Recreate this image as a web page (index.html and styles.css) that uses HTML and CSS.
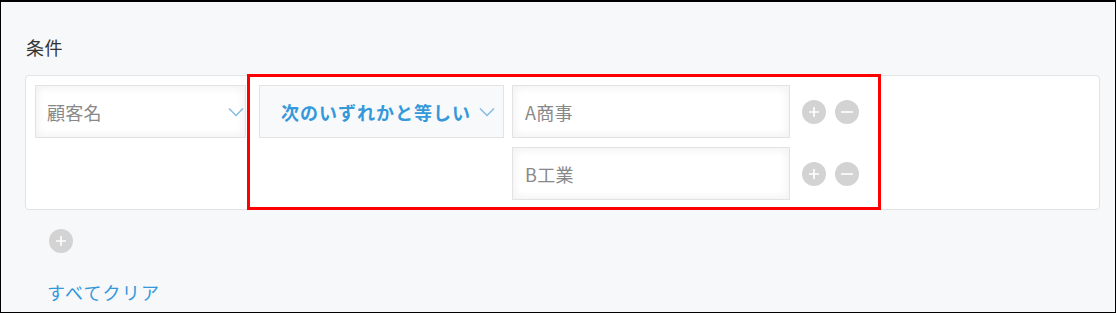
FILE: index.html
```html
<!DOCTYPE html>
<html lang="ja">
<head>
<meta charset="utf-8">
<link rel="stylesheet" href="styles.css">
</head>
<body>
<div class="frame">
  <div class="title">条件</div>
  <div class="card">
    <div class="select field">
      <span class="label">顧客名</span>
      <svg class="chev" width="16" height="10" viewBox="0 0 16 10"><path d="M1 1.5 L8 8.5 L15 1.5" fill="none" stroke="#84bce6" stroke-width="1.5"/></svg>
    </div>
    <div class="select operator">
      <span class="op-label">次のいずれかと等しい</span>
      <svg class="chev" width="16" height="10" viewBox="0 0 16 10"><path d="M1 1.5 L8 8.5 L15 1.5" fill="none" stroke="#84bce6" stroke-width="1.5"/></svg>
    </div>
    <div class="values">
      <div class="value-row">
        <div class="input">A商事</div>
        <span class="btn"><svg width="24" height="24" viewBox="0 0 24 24"><circle cx="12" cy="12" r="12" fill="#d3d3d3"/><path d="M12 7v10M7 12h10" stroke="#fff" stroke-width="1.6"/></svg></span>
        <span class="btn"><svg width="24" height="24" viewBox="0 0 24 24"><circle cx="12" cy="12" r="12" fill="#d3d3d3"/><path d="M6 12h12" stroke="#fff" stroke-width="1.6"/></svg></span>
      </div>
      <div class="value-row">
        <div class="input">B工業</div>
        <span class="btn"><svg width="24" height="24" viewBox="0 0 24 24"><circle cx="12" cy="12" r="12" fill="#d3d3d3"/><path d="M12 7v10M7 12h10" stroke="#fff" stroke-width="1.6"/></svg></span>
        <span class="btn"><svg width="24" height="24" viewBox="0 0 24 24"><circle cx="12" cy="12" r="12" fill="#d3d3d3"/><path d="M6 12h12" stroke="#fff" stroke-width="1.6"/></svg></span>
      </div>
    </div>
  </div>
  <div class="add-row">
    <svg width="24" height="24" viewBox="0 0 24 24"><circle cx="12" cy="12" r="12" fill="#d3d3d3"/><path d="M12 7v10M7 12h10" stroke="#fff" stroke-width="1.6"/></svg>
  </div>
  <a class="clear">すべてクリア</a>
  <div class="highlight"></div>
</div>
</body>
</html>
```
FILE: styles.css
```css
* { box-sizing: border-box; }
html, body { margin: 0; padding: 0; background: #fff; }
body {
  font-family: "Noto Sans CJK JP", "Noto Sans", "Liberation Sans", sans-serif;
}
.frame {
  position: relative;
  width: 1116px;
  height: 313px;
  border-left: 1px solid #000;
  border-top: 2px solid #000;
  border-right: 1px solid #000;
  border-bottom: 1px solid #000;
  background: #f6f8fa;
  padding: 32px 15px 0 24px;
}
.title {
  font-size: 18px;
  line-height: 26px;
  color: #333;
  margin-left: 1px;
  letter-spacing: 0.5px;
}
.card {
  margin-top: 15px;
  height: 135px;
  background: #fff;
  border: 1px solid #e3e3e3;
  border-radius: 4px;
  padding: 9px;
  display: flex;
  align-items: flex-start;
}
.select {
  height: 53px;
  border: 1px solid #e3e3e3;
  display: flex;
  align-items: center;
}
.field {
  width: 211px;
  padding: 0 1px 0 11px;
  background: #fff;
  box-shadow: inset 1px 1px 10px #f3f3f3, inset -1px -1px 10px #f3f3f3;
}
.label {
  font-size: 18px;
  color: #888;
  letter-spacing: 0.3px;
}
.chev { margin-left: auto; display: block; }
.operator {
  width: 245px;
  margin-left: 13px;
  background: #f7f9fa;
  padding: 0 8px 0 21px;
}
.op-label {
  font-size: 18px;
  font-weight: 700;
  color: #3498db;
  letter-spacing: 1px;
}
.values {
  margin-left: 8px;
  display: flex;
  flex-direction: column;
  gap: 9px;
}
.value-row {
  display: flex;
  align-items: center;
}
.input {
  width: 278px;
  height: 53px;
  border: 1px solid #e3e3e3;
  background: #fff;
  box-shadow: inset 1px 1px 10px #f3f3f3, inset -1px -1px 10px #f3f3f3;
  padding-left: 12px;
  display: flex;
  align-items: center;
  font-size: 18px;
  color: #888;
  letter-spacing: 0.3px;
}
.btn { display: block; width: 24px; height: 24px; margin-left: 9px; }
.btn:first-of-type { margin-left: 12px; }
.btn svg, .add-row svg { display: block; }
.add-row {
  margin: 19px 0 0 24px;
  width: 24px;
  height: 24px;
}
.clear {
  display: block;
  margin: 26px 0 0 22px;
  font-size: 18px;
  line-height: 26px;
  color: #3498db;
  letter-spacing: 1.2px;
  width: max-content;
}
.highlight {
  position: absolute;
  left: 246px;
  top: 72px;
  width: 634px;
  height: 136px;
  border: 3px solid #ff0000;
  pointer-events: none;
}
```
